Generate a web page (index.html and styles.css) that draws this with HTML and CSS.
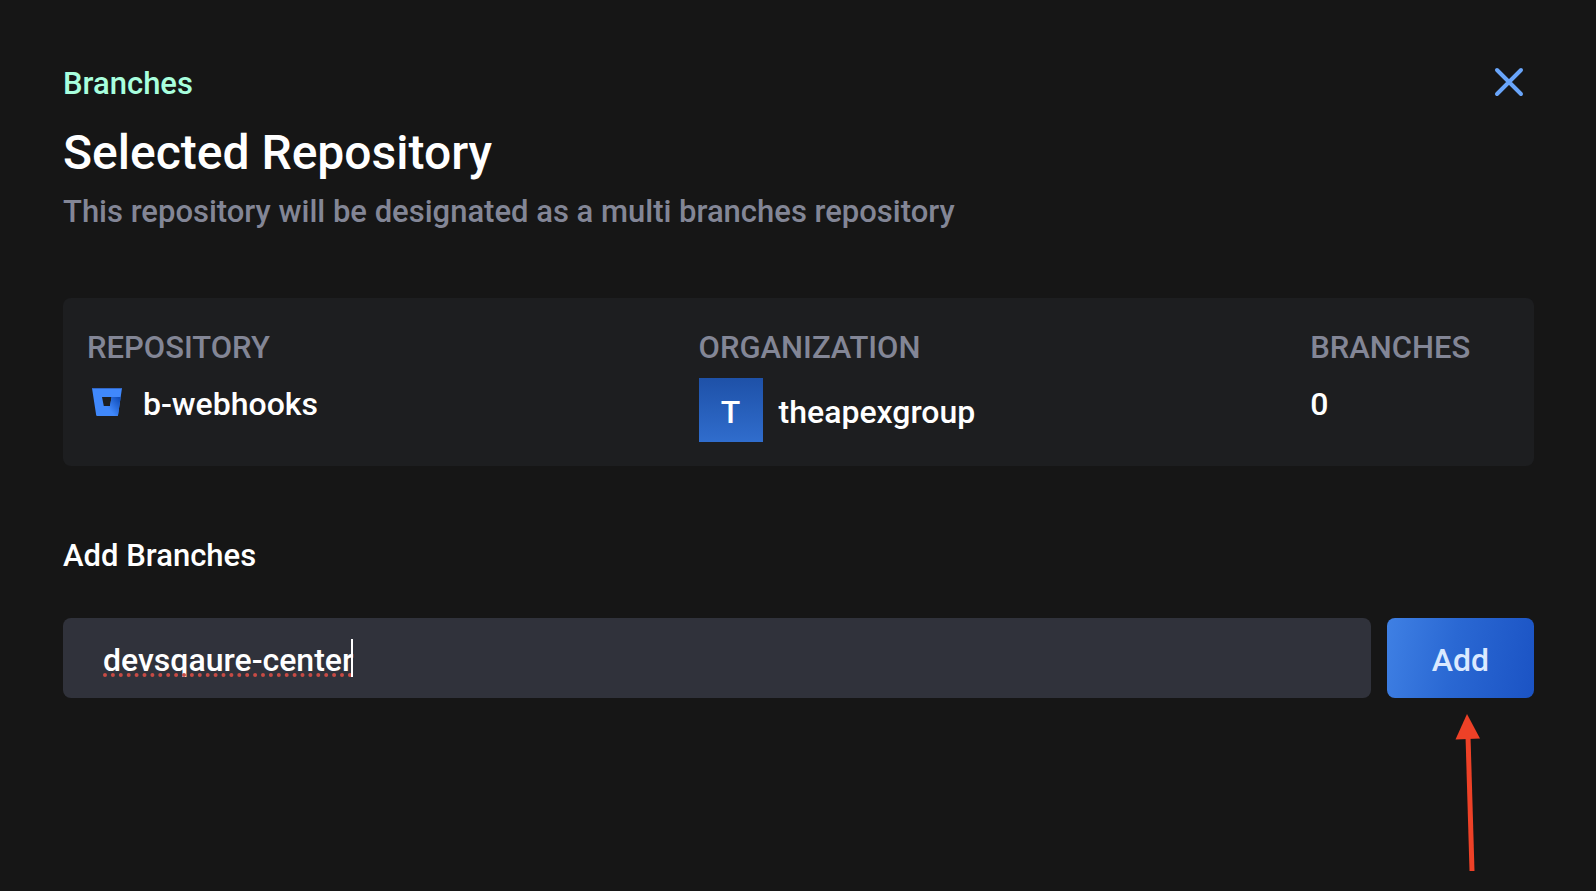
FILE: index.html
```html
<!DOCTYPE html>
<html lang="en">
<head>
<meta charset="utf-8">
<title>Branches</title>
<link rel="stylesheet" href="styles.css">
</head>
<body>
<main class="panel">
  <header class="header">
    <div>
      <p class="eyebrow">Branches</p>
      <h1 class="title">Selected Repository</h1>
      <p class="subtitle">This repository will be designated as a multi branches repository</p>
    </div>
    <button class="close" type="button" aria-label="Close">
      <svg width="36" height="36" viewBox="0 0 36 36" fill="none" stroke="currentColor" stroke-width="4" stroke-linecap="round"><path d="M6 6 30 30M30 6 6 30"/></svg>
    </button>
  </header>

  <dl class="card">
    <div>
      <dt class="label">REPOSITORY</dt>
      <dd class="value repo">
        <svg class="bitbucket" width="30" height="32" viewBox="0 0 30 32" aria-hidden="true">
          <defs><linearGradient id="fold" x1="29" y1="9" x2="16" y2="20" gradientUnits="userSpaceOnUse"><stop offset="0.1" stop-color="#0f4cb8"/><stop offset="1" stop-color="#4088fb"/></linearGradient></defs>
          <path fill="#4088fb" fill-rule="evenodd" d="M0.6 0H29.4Q30 0 29.9 0.7L26 27.3Q25.900 28 25.200 28H5Q4.400 28 4.200 27.300L0.100 0.700Q0 0 0.600 0ZM10 9 11.800 18H18L19.600 9Z"/>
          <path fill="url(#fold)" d="M28.700 9H19.600L18 18H11.800L5 28H25.200Q25.900 28 26 27.300Z"/>
          <path fill="#3268c8" d="M0.300 0H29.700V1H0.300Z"/>
        </svg>
        <span>b-webhooks</span>
      </dd>
    </div>
    <div>
      <dt class="label">ORGANIZATION</dt>
      <dd class="value org"><span class="avatar">T</span><span class="org-name">theapexgroup</span></dd>
    </div>
    <div>
      <dt class="label">BRANCHES</dt>
      <dd class="value">0</dd>
    </div>
  </dl>

  <form class="form">
    <label class="form-label" for="branch">Add Branches</label>
    <div class="row">
      <div class="field">
        <input class="input" id="branch" type="text" value="devsqaure-center" spellcheck="false">
        <svg class="spelling" width="248" height="4" aria-hidden="true"><path d="M2 2H248" stroke="#c74b45" stroke-width="4" stroke-linecap="round" stroke-dasharray="0 7.900"/></svg>
        <span class="caret"></span>
      </div>
      <div class="action">
        <button class="add" type="button">Add</button>
        <svg class="arrow" width="26" height="158" viewBox="0 0 26 158" aria-hidden="true"><path d="M13 22 17 157" stroke="#ee4127" stroke-width="5"/><path d="M12 0 25 24.500 0.500 25.500Z" fill="#ee4127"/></svg>
      </div>
    </div>
  </form>
</main>
</body>
</html>
```
FILE: styles.css
```css
* { box-sizing: border-box; }
body {
  margin: 0;
  min-height: 100vh;
  background: #161616;
  color: #fff;
  font: 500 32px/40px Roboto, "Liberation Sans", sans-serif;
}
p, h1, dl, dd { margin: 0; }
button, input { font: inherit; border: 0; }
.panel { padding: 64px 62px 64px 63px; }
.header { display: flex; justify-content: space-between; align-items: flex-start; }
.eyebrow, .subtitle, .label, .form-label { font-size: 31px; }
.eyebrow { color: #a8ffde; }
.title { margin: 21px 0 11px; font-size: 48px; line-height: 56px; font-weight: 500; }
.subtitle { color: #838696; }
.close { display: flex; margin-right: 7px; padding: 0; background: none; color: #69a5fa; cursor: pointer; }
.card {
  display: grid;
  grid-template-columns: 3fr 3fr 1fr;
  margin-top: 66px;
  padding: 30px 20px 24px 24px;
  border-radius: 8px;
  background: #1d1e20;
}
.label { color: #838696; }
.value { display: flex; align-items: center; min-height: 52px; margin-top: 10px; }
.repo { gap: 21px; }
.bitbucket { margin-left: 5px; }
.org { gap: 16px; }
.org-name { padding-top: 4px; }
.avatar {
  display: flex;
  justify-content: center;
  align-items: center;
  width: 64px;
  height: 64px;
  padding-top: 4px;
  background: linear-gradient(#1e51a8, #306dcd);
}
.form { margin-top: 70px; }
.form-label { display: block; }
.row { display: flex; gap: 16px; margin-top: 42px; }
.field { position: relative; flex: 1; }
.input {
  display: block;
  width: 100%;
  height: 80px;
  padding: 4px 40px 0;
  border-radius: 8px;
  outline: 0;
  background: #30323b;
  color: #fff;
}
.spelling { position: absolute; left: 40px; top: 55px; }
.caret { position: absolute; left: 288px; top: 21px; width: 2px; height: 38px; background: #fff; }
.action { position: relative; }
.add {
  display: block;
  width: 147px;
  height: 80px;
  padding: 4px 0 0;
  border-radius: 8px;
  background: linear-gradient(100deg, #3f80e4, #2a68d3 45%, #1b53c4);
  color: #dbe9ff;
  cursor: pointer;
}
.arrow { position: absolute; left: 68px; top: 96px; }
```
